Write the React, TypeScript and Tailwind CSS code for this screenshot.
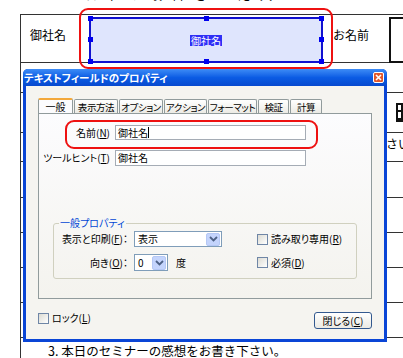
import React from "react";

const Box = () => (
  <span className="block w-[11px] h-[11px] border border-[#6f86a6] bg-gradient-to-br from-[#dcdbd3] to-[#ffffff]" />
);

const Chevron = () => (
  <svg width="9" height="6" viewBox="0 0 9 6">
    <path d="M1 1 L4.5 4.5 L8 1" stroke="#4d6185" strokeWidth="1.8" fill="none" />
  </svg>
);

const Handle = ({ className }: { className: string }) => (
  <span className={"absolute w-[5px] h-[5px] bg-[#0000ee] " + className} />
);

const tab =
  "ml-[1px] h-[14px] flex items-center justify-center whitespace-nowrap tracking-[-0.4px] text-[9.5px] bg-gradient-to-b from-[#ffffff] to-[#ecebe5] border border-b-0 border-[#919b9c] rounded-t-[2px]";

export default function App() {
  return (
    <div className="relative w-[403px] h-[358px] overflow-hidden bg-white text-black font-['Noto_Sans_CJK_JP',sans-serif]">
      {/* document page behind the dialog */}
      <div className="h-[14px] pl-[40px] overflow-hidden">
        <div className="-mt-[13px] text-[12px] leading-[16px] tracking-[10px] whitespace-nowrap">２．以下の項目をご記入</div>
      </div>
      <div className="ml-[20px] border-l border-[#333] text-[12px] leading-[16px]">
        <div className="h-[48px] border-t border-[#333] flex">
          <div className="w-[60px] pl-[9px] pt-[12px]">御社名</div>
          <div className="w-[250px] pl-[8px] pt-[2px]">
            <div className="relative w-[234px] h-[46px] border-2 border-[#1010d0] bg-[#dfe5fd] flex items-center justify-center">
              <span className="bg-[#2f2ff6] text-white text-[10px] leading-[11px] px-[1px]">御社名</span>
              <Handle className="-left-[3px] -top-[3px]" />
              <Handle className="left-[113px] -top-[3px]" />
              <Handle className="-right-[3px] -top-[3px]" />
              <Handle className="-left-[3px] top-[18px]" />
              <Handle className="-right-[3px] top-[18px]" />
              <Handle className="-left-[3px] -bottom-[3px]" />
              <Handle className="left-[113px] -bottom-[3px]" />
              <Handle className="-right-[3px] -bottom-[3px]" />
            </div>
          </div>
          <div className="w-[58px] pl-[2px] pt-[12px]">お名前</div>
          <div className="flex-1 pt-[2px]">
            <div className="h-[46px] border-2 border-r-0 border-[#111]" />
          </div>
        </div>
        <div className="h-[30px] border-t border-[#333]" />
        <div className="h-[40px] border-t border-[#333] flex justify-end">
          <div className="mt-[10px] w-[7px] h-[19px] bg-[#111] flex flex-col gap-[2px] p-[2px]">
            <span className="block h-[5px] bg-white" />
            <span className="block h-[6px] bg-white" />
          </div>
        </div>
        <div className="h-[29px] border-t border-[#333] pl-[353px] pt-[3px] whitespace-nowrap">下さい</div>
        <div className="h-[36px] border-t border-[#333]" />
        <div className="h-[35px] border-t border-[#333]" />
        <div className="h-[35px] border-t border-[#333]" />
        <div className="h-[35px] border-t border-[#333]" />
        <div className="h-[35px] border-t border-[#333]" />
        <div className="h-[30px] border-t border-[#333] pl-[27px] pt-[5px] text-[12.5px] whitespace-nowrap">3. 本日のセミナーの感想をお書き下さい。</div>
      </div>

      {/* red highlight on the field */}
      <div className="absolute left-[79px] top-[8px] w-[254px] h-[61px] border-2 border-[#ee1111] rounded-[9px]" />

      {/* properties dialog */}
      <div className="absolute left-[23px] top-[69px] w-[364px] h-[273px] flex flex-col bg-[#0a45d6] rounded-t-[5px] text-[10px] leading-[12px] [font-feature-settings:'palt']">
        <div className="h-[17px] flex items-center justify-between pl-[1px] pr-[3px] rounded-t-[5px] bg-gradient-to-b from-[#3d8cf6] via-[#0b5ce4] to-[#0849cf]">
          <span className="text-white font-bold text-[10.5px]">テキストフィールドのプロパティ</span>
          <span className="w-[11px] h-[11px] rounded-[2px] border border-white bg-[#e2572b] flex items-center justify-center">
            <svg width="7" height="7" viewBox="0 0 7 7">
              <path d="M1 1 L6 6 M6 1 L1 6" stroke="white" strokeWidth="1.6" />
            </svg>
          </span>
        </div>
        <div className="flex-1 mx-[3px] mb-[3px] bg-[#f5f4f0] flex flex-col px-[12px] pt-[11px]">
          <div className="flex items-end h-[16px]">
            <div className="w-[35px] h-[16px] flex items-center justify-center bg-[#fcfcfe] border border-b-0 border-[#919b9c] border-t-2 border-t-[#f3a83b] rounded-t-[2px] relative top-[1px]">一般</div>
            <div className={tab + " w-[44px]"}>表示方法</div>
            <div className={tab + " w-[44px]"}>オプション</div>
            <div className={tab + " w-[43px]"}>アクション</div>
            <div className={tab + " w-[49px]"}>フォーマット</div>
            <div className={tab + " w-[31px]"}>検証</div>
            <div className={tab + " w-[32px]"}>計算</div>
          </div>
          <div className="relative h-[186px] border border-[#919b9c] bg-gradient-to-b from-[#fcfcfe] to-[#f4f3ee] pt-[11px]">
            <div className="flex items-center">
              <span className="w-[71px] text-right">名前(<span className="underline">N</span>)</span>
              <div className="ml-[5px] w-[191px] h-[15px] border border-[#a5acb5] bg-white flex items-center pl-[2px]">
                御社名<span className="block w-px h-[11px] bg-black" />
              </div>
            </div>
            <div className="flex items-center mt-[10px]">
              <span className="w-[71px] text-right">ツールヒント(<span className="underline">T</span>)</span>
              <div className="ml-[5px] w-[191px] h-[16px] border border-[#a5acb5] bg-white flex items-center pl-[2px]">御社名</div>
            </div>
            <fieldset className="mt-[50px] ml-[14px] w-[304px] border border-[#d0d0bf] rounded-[3px] pl-0 pb-[7px]">
              <legend className="ml-[5px] px-[1px] text-[#0046d5] leading-[14px]">一般プロパティ</legend>
              <div className="grid grid-cols-[80px_123px_1fr] items-center gap-y-[7px] mt-[1px]">
                <span className="text-right pr-[6px] whitespace-nowrap">表示と印刷(<span className="underline">F</span>)：</span>
                <div className="w-[88px] h-[16px] border border-[#7f9db9] bg-white flex items-center justify-between pl-[3px] p-[1px]">
                  表示
                  <span className="w-[14px] h-[13px] rounded-[2px] bg-[#c4d4fc] border border-[#b5c8f5] flex items-center justify-center"><Chevron /></span>
                </div>
                <span className="flex items-center gap-[3px] whitespace-nowrap"><Box /><span>読み取り専用(<span className="underline">R</span>)</span></span>
                <span className="text-right pr-[6px] whitespace-nowrap">向き(<span className="underline">O</span>)：</span>
                <div className="flex items-center">
                  <div className="w-[34px] h-[17px] border border-[#7f9db9] bg-white flex items-center justify-between pl-[3px] p-[1px]">
                    0
                    <span className="w-[14px] h-[14px] rounded-[2px] bg-[#c4d4fc] border border-[#b5c8f5] flex items-center justify-center"><Chevron /></span>
                  </div>
                  <span className="ml-[8px]">度</span>
                </div>
                <span className="flex items-center gap-[3px] whitespace-nowrap"><Box /><span>必須(<span className="underline">D</span>)</span></span>
              </div>
            </fieldset>
            <div className="absolute left-[26px] top-[6px] w-[253px] h-[29px] border-2 border-[#ee1111] rounded-[9px]" />
          </div>
          <div className="flex items-start justify-between pt-[13px]">
            <span className="flex items-center gap-[3px]"><Box /><span>ロック(<span className="underline">L</span>)</span></span>
            <button className="w-[58px] h-[17px] rounded-[3px] border border-[#33598f] bg-gradient-to-b from-[#ffffff] to-[#ebeae4] text-[10px] leading-[12px]">閉じる(<span className="underline">C</span>)</button>
          </div>
        </div>
      </div>
    </div>
  );
}
